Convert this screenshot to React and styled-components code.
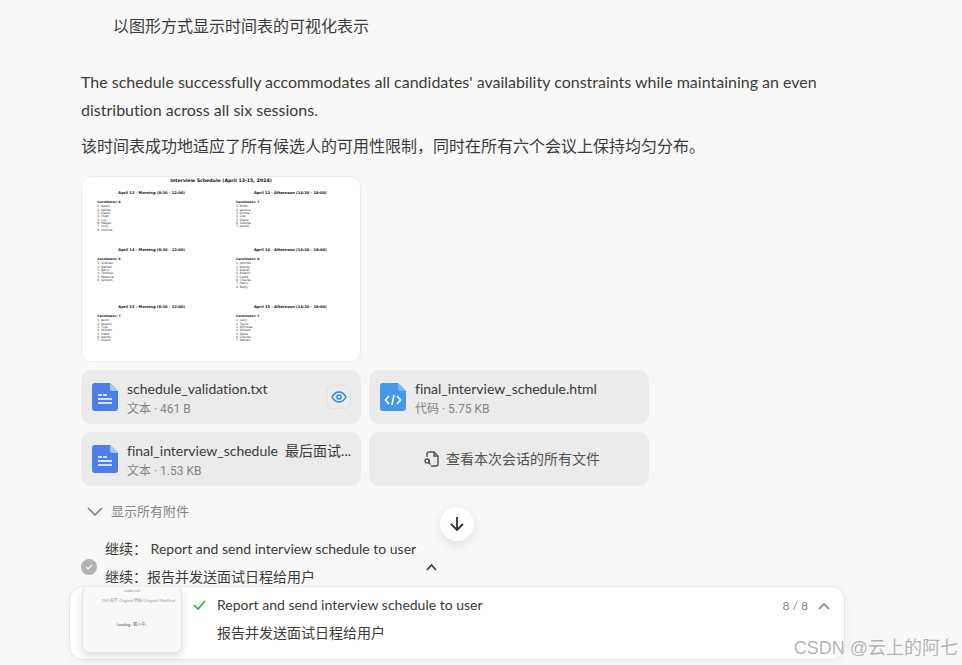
import React from "react";
import styled, { createGlobalStyle } from "styled-components";

const GlobalStyle = createGlobalStyle`
  * {
    box-sizing: border-box;
  }

  body {
    margin: 0;
    background-color: #f8f8f8;
    color: #3c3b37;
    font-family: Lato, "Noto Sans CJK SC", sans-serif;
    font-size: 16px;
    line-height: 28px;
    font-variant-ligatures: none;
  }

  button {
    font: inherit;
    color: inherit;
    border: 0;
    padding: 0;
    background: none;
    cursor: pointer;
  }

  p {
    margin: 0;
  }

  svg {
    display: block;
    flex-shrink: 0;
  }
`;

const Page = styled.div`
  position: relative;
  display: flex;
  flex-direction: column;
  height: 100vh;
  overflow: hidden;
  padding: 0 117px 5px 69px;
`;

const Messages = styled.main`
  flex: 1;
  min-height: 0;
  overflow: hidden;
  padding: 12px 12px 0;
`;

const ListItem = styled.p`
  padding-left: 32px;
  margin-bottom: 28px;
`;

const Paragraph = styled.p`
  margin-bottom: 8px;
`;

const Attachments = styled.section`
  display: grid;
  grid-template-columns: repeat(2, minmax(0, 280px));
  gap: 8px;
  margin-top: 16px;
`;

const Preview = styled.figure`
  grid-column: 1;
  margin: 0;
  border: 1px solid #ececeb;
  border-radius: 10px;
  background-color: #fff;
  overflow: hidden;

  svg {
    width: 100%;
    height: auto;
  }
`;

const Card = styled.div`
  grid-column: ${({ $first }) => ($first ? "1" : "auto")};
  display: flex;
  align-items: center;
  gap: 9px;
  height: 54px;
  padding: 0 8px 0 11px;
  border-radius: 10px;
  background-color: #ebebeb;
`;

const CardText = styled.div`
  flex: 1;
  min-width: 0;
  padding-top: 3px;
`;

const FileName = styled.div`
  font-size: 14px;
  line-height: 21px;
  white-space: pre;
`;

const FileMeta = styled.div`
  font-family: Roboto, "Noto Sans CJK SC", sans-serif;
  font-size: 12px;
  line-height: 21px;
  color: #858481;
`;

const EyeButton = styled.button`
  display: flex;
  align-items: center;
  justify-content: center;
  width: 24px;
  height: 24px;
  border: 1px solid #e0e0df;
  border-radius: 6px;
  margin-right: 2px;
`;

const AllFiles = styled.button`
  display: flex;
  align-items: center;
  justify-content: center;
  gap: 7px;
  height: 54px;
  padding-left: 6px;
  border-radius: 10px;
  background-color: #ebebeb;
  color: #535350;
  font-size: 14px;
`;

const ShowAll = styled.button`
  display: flex;
  align-items: center;
  gap: 8px;
  margin-top: 11px;
  padding-left: 6px;
  color: #858481;
  font-size: 13px;
`;

const Task = styled.div`
  display: flex;
  align-items: center;
  gap: 8px;
  width: 356px;
  margin-top: 10px;
  font-size: 14px;
`;

const TaskText = styled.div`
  flex: 1;
  white-space: pre;
`;

const TaskToggle = styled.button`
  padding-top: 8px;
`;

const TaskState = styled.span`
  padding-top: 8px;
`;

const Dock = styled.footer`
  position: relative;
  display: flex;
  align-items: flex-start;
  height: 74px;
  padding: 0 14px 0 12px;
  border: 1px solid #e7e7e6;
  border-radius: 14px;
  background-color: #fff;
  box-shadow: 0 4px 12px rgba(0, 0, 0, 0.04);
`;

const ScrollDown = styled.button`
  position: absolute;
  left: 50%;
  bottom: 118px;
  width: 34px;
  height: 34px;
  margin-left: -17px;
  display: flex;
  align-items: center;
  justify-content: center;
  border-radius: 50%;
  background-color: #fff;
  box-shadow: 0 4px 12px rgba(0, 0, 0, 0.1);
`;

const Screen = styled.div`
  width: 100px;
  height: 67px;
  margin-top: -1px;
  flex-shrink: 0;
  border: 1px solid #e3e3e2;
  border-top-color: #f0f0ef;
  border-radius: 6px;
  background-color: #f8f8f8;
  box-shadow: 0 4px 8px rgba(0, 0, 0, 0.12);
  color: #999;
  font-size: 4px;
  line-height: 8px;
  text-align: center;
`;

const ScreenTabs = styled.div`
  display: flex;
  justify-content: space-between;
  padding: 2px 6px 0 19px;
  white-space: nowrap;
`;

const ScreenLoading = styled.div`
  padding-top: 16px;
  color: #555;
`;

const DockTask = styled.div`
  display: flex;
  flex: 1;
  gap: 11px;
  padding: 4px 0 0 11px;
  font-size: 14px;

  svg {
    margin-top: 8px;
  }
`;

const Counter = styled.button`
  display: flex;
  align-items: center;
  gap: 10px;
  margin-top: 5px;
  color: #858481;
  font-size: 12px;
`;

const Watermark = styled.div`
  position: absolute;
  right: 4px;
  bottom: 3px;
  color: #b4b4b4;
  font-family: "Liberation Sans", "Noto Sans CJK SC", sans-serif;
  font-size: 18px;
  text-shadow: -1px -1px 0 #fff;
`;

const sessions = [
  {
    title: "April 13 - Morning (8:30 - 12:00)",
    names: ["Karen", "Vanita", "David", "Hugo", "Lily", "Megan", "Lucy", "Yvonne"],
  },
  {
    title: "April 13 - Afternoon (14:30 - 18:00)",
    names: ["Robin", "Jessica", "Emma", "Zoe", "Diana", "George", "James"],
  },
  {
    title: "April 14 - Morning (8:30 - 12:00)",
    names: ["Siobhan", "Nathan", "Barry", "Thomas", "Rebecca", "Jackson"],
  },
  {
    title: "April 14 - Afternoon (14:30 - 18:00)",
    names: ["Jennifer", "Wendy", "Daniel", "Beatrix", "Caleb", "Charles", "Harry", "Betty"],
  },
  {
    title: "April 15 - Morning (8:30 - 12:00)",
    names: ["Jason", "Sharon", "Tina", "William", "Frank", "Rachel", "Grace"],
  },
  {
    title: "April 15 - Afternoon (14:30 - 18:00)",
    names: ["Lucy", "Taylor", "Nicholas", "William", "Paula", "Charles", "Warren"],
  },
];

const SchedulePlot = () => (
  <svg viewBox="0 0 834 552" fontFamily="DejaVu Sans, sans-serif" fill="#111">
    <text x="417" y="16" fontSize="14" fontWeight="700" textAnchor="middle">
      Interview Schedule (April 13-15, 2024)
    </text>
    {sessions.map((session, i) => {
      const right = i % 2;
      const top = Math.floor(i / 2) * 171;
      const left = right ? 462 : 46;
      return (
        <g key={session.title}>
          <text
            x={right ? 625 : 209}
            y={top + 50}
            fontSize="11"
            fontWeight="700"
            textAnchor="middle"
          >
            {session.title}
          </text>
          <text x={left} y={top + 77} fontSize="9" fontWeight="700">
            Candidates: {session.names.length}
          </text>
          {session.names.map((name, n) => (
            <text key={name} x={left} y={top + 91 + n * 10} fontSize="9" fill="#333">
              {n + 1}. {name}
            </text>
          ))}
        </g>
      );
    })}
  </svg>
);

const FileIcon = ({ code }) => (
  <svg width="26" height="28" viewBox="0 0 26 28">
    <path
      d="M3 0h15l8 8v17a3 3 0 0 1-3 3H3a3 3 0 0 1-3-3V3a3 3 0 0 1 3-3z"
      fill={code ? "#4797e8" : "#4e7fe6"}
    />
    <path d="M18 0l8 8h-6a2 2 0 0 1-2-2z" fill={code ? "#7db8f2" : "#a3c8fb"} />
    {code ? (
      <path
        d="M9 13l-3.500 4L9 21M17 13l3.500 4L17 21M14 12l-2 10"
        fill="none"
        stroke="#fff"
        strokeWidth="1.600"
      />
    ) : (
      <path d="M6 12h4M11 12h4M6 16h14M6 20h14" stroke="#fff" strokeWidth="1.600" />
    )}
  </svg>
);

const Chevron = ({ up, size, height, stroke = "currentColor" }) => (
  <svg width={size} height={height} viewBox={`0 0 ${size} ${height}`} fill="none">
    <path
      d={
        up
          ? `M1 ${height - 1}L${size / 2} 1L${size - 1} ${height - 1}`
          : `M1 1L${size / 2} ${height - 1}L${size - 1} 1`
      }
      stroke={stroke}
      strokeWidth="1.700"
    />
  </svg>
);

const App = () => {
  return (
    <>
      <GlobalStyle />
      <Page>
        <Messages>
          <ListItem>以图形方式显示时间表的可视化表示</ListItem>
          <Paragraph>
            The schedule successfully accommodates all candidates' availability
            constraints while maintaining an even distribution across all six
            sessions.
          </Paragraph>
          <Paragraph>
            该时间表成功地适应了所有候选人的可用性限制，同时在所有六个会议上保持均匀分布。
          </Paragraph>

          <Attachments>
            <Preview>
              <SchedulePlot />
            </Preview>
            <Card $first>
              <FileIcon />
              <CardText>
                <FileName>schedule_validation.txt</FileName>
                <FileMeta>文本 · 461 B</FileMeta>
              </CardText>
              <EyeButton aria-label="预览">
                <svg width="16" height="12" viewBox="0 0 16 12" fill="none" stroke="#1a8cf0" strokeWidth="1.500">
                  <path d="M1 6C3 2.500 5.300 1 8 1s5 1.500 7 5c-2 3.500-4.300 5-7 5S3 9.500 1 6z" />
                  <circle cx="8" cy="6" r="2" />
                </svg>
              </EyeButton>
            </Card>
            <Card>
              <FileIcon code />
              <CardText>
                <FileName>final_interview_schedule.html</FileName>
                <FileMeta>代码 · 5.75 KB</FileMeta>
              </CardText>
            </Card>
            <Card $first>
              <FileIcon />
              <CardText>
                <FileName>{"final_interview_schedule  最后面试..."}</FileName>
                <FileMeta>文本 · 1.53 KB</FileMeta>
              </CardText>
            </Card>
            <AllFiles>
              <svg width="15" height="16" viewBox="0 0 15 16" fill="none" stroke="#535350" strokeWidth="1.400">
                <path d="M3 6V3a2 2 0 0 1 2-2h5l4 4v8a2 2 0 0 1-2 2H7" />
                <path d="M10 1v4h4" />
                <circle cx="3" cy="10" r="2" />
                <path d="M5 8v4l1.500 1.500" />
              </svg>
              查看本次会话的所有文件
            </AllFiles>
          </Attachments>

          <ShowAll>
            <Chevron size={16} height={9} />
            显示所有附件
          </ShowAll>

          <Task>
            <TaskState>
              <svg width="16" height="16" viewBox="0 0 16 16" fill="none">
                <circle cx="8" cy="8" r="8" fill="#b3b3b1" />
                <path d="M5 8l2 2 4-4" stroke="#fff" strokeWidth="1.200" />
              </svg>
            </TaskState>
            <TaskText>
              <div>{"继续： Report and send interview schedule to user"}</div>
              <div>继续：报告并发送面试日程给用户</div>
            </TaskText>
            <TaskToggle aria-label="收起">
              <Chevron up size={11} height={7} />
            </TaskToggle>
          </Task>
        </Messages>

        <Dock>
          <ScrollDown aria-label="滚动到底部">
            <svg width="14" height="15" viewBox="0 0 14 15" fill="none" stroke="#34322d" strokeWidth="1.800">
              <path d="M7 0v13M1 7l6 6 6-6" />
            </svg>
          </ScrollDown>
          <Screen>
            <div>node.red</div>
            <ScreenTabs>
              <span>Diff 差异</span>
              <span>Original 原始/Original</span>
              <span>Modified</span>
            </ScreenTabs>
            <ScreenLoading>Loading.. 载入中..</ScreenLoading>
          </Screen>
          <DockTask>
            <svg width="13" height="12" viewBox="0 0 13 12" fill="none" stroke="#25ba3b" strokeWidth="1.700">
              <path d="M1 6l4 4 7-8" />
            </svg>
            <div>
              <div>Report and send interview schedule to user</div>
              <div>报告并发送面试日程给用户</div>
            </div>
          </DockTask>
          <Counter>
            8 / 8
            <Chevron up size={12} height={7} />
          </Counter>
        </Dock>

        <Watermark>CSDN @云上的阿七</Watermark>
      </Page>
    </>
  );
};

export default App;
